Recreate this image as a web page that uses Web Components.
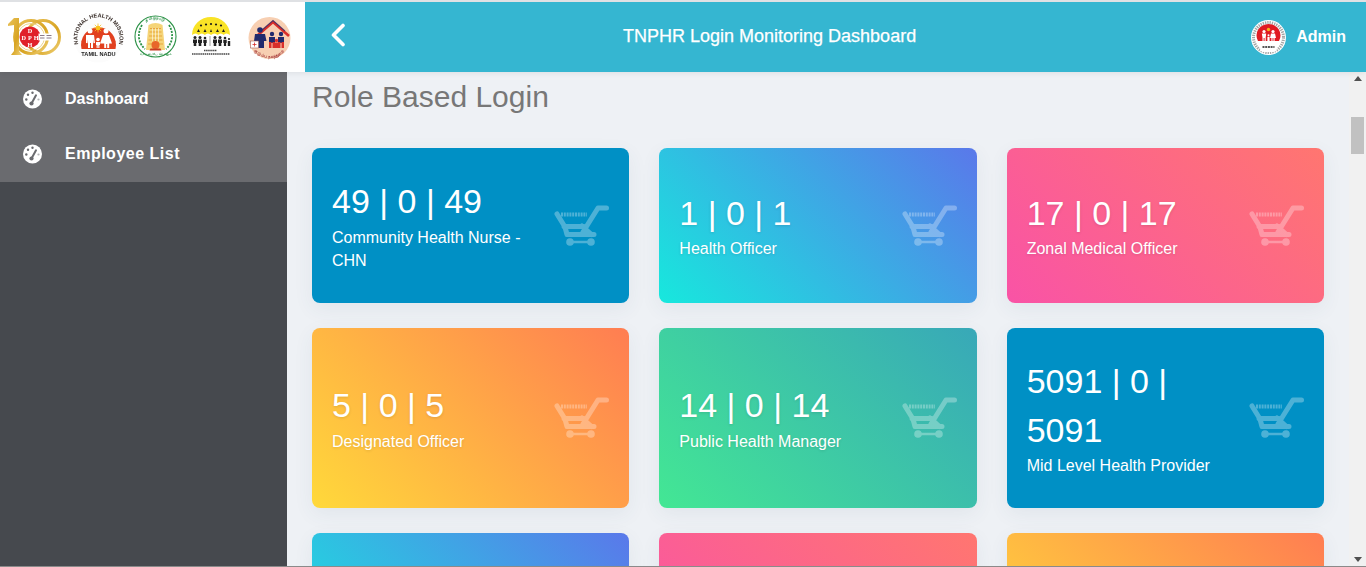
<!DOCTYPE html>
<html lang="en">
<head>
<meta charset="utf-8">
<title>TNPHR Login Monitoring Dashboard</title>
<style>
html,body{margin:0;padding:0;height:100%;overflow:hidden;background:#eef1f5;font-family:"Liberation Sans",Arial,sans-serif}
</style>
</head>
<body>
<app-shell>
  <top-bar slot="top" heading="TNPHR Login Monitoring Dashboard" user="Admin"></top-bar>
  <side-nav slot="side">
    <nav-item>Dashboard</nav-item>
    <nav-item spaced>Employee List</nav-item>
  </side-nav>
  <content-pane slot="main" heading="Role Based Login">
    <stat-card value="49 | 0 | 49" label="Community Health Nurse - CHN" tone="blue"></stat-card>
    <stat-card value="1 | 0 | 1" label="Health Officer" tone="aqua"></stat-card>
    <stat-card value="17 | 0 | 17" label="Zonal Medical Officer" tone="pink"></stat-card>
    <stat-card value="5 | 0 | 5" label="Designated Officer" tone="orange"></stat-card>
    <stat-card value="14 | 0 | 14" label="Public Health Manager" tone="green"></stat-card>
    <stat-card value="5091 | 0 | 5091" label="Mid Level Health Provider" tone="blue"></stat-card>
    <stat-card tone="aqua"></stat-card>
    <stat-card tone="pink"></stat-card>
    <stat-card tone="orange"></stat-card>
  </content-pane>
  <fake-scrollbar slot="scroll"></fake-scrollbar>
</app-shell>

<script>
function def(name, css, html){
  customElements.define(name, class extends HTMLElement{
    connectedCallback(){
      if(this.shadowRoot) return;
      const r=this.attachShadow({mode:'open'});
      r.innerHTML='<style>'+css+'</style>'+(typeof html==='function'?html(this):html);
    }
  });
}
const attr=(el,n)=>{const v=el.getAttribute(n);return v===null?'':v};

def('app-shell',`
  :host{display:flex;flex-direction:column;height:567px;box-sizing:border-box;border-top:2px solid #dfe1e4;border-bottom:1px solid #8a8a8a;overflow:hidden}
  .row{flex:1;min-height:0;display:flex}
`,`<slot name="top"></slot><div class="row"><slot name="side"></slot><slot name="main"></slot><slot name="scroll"></slot></div>`);

def('top-bar',`
  :host{display:flex;height:70px;flex:none;position:relative;z-index:2;box-shadow:0 1px 6px rgba(0,0,0,.08)}
  .blue{flex:1;background:#35b6d1;display:flex;align-items:center;color:#fff}
  .back{margin:0 0 4px 25px;display:block}
  h1{margin:0 0 1px 277px;font:400 18px/1.43 "Liberation Sans",Arial,sans-serif;-webkit-text-stroke:.25px #fff;white-space:nowrap}
  .user{margin-left:auto;display:flex;align-items:center;gap:10px;padding-right:20px;font-weight:700;font-size:16px}
  .user svg{display:block;margin-top:1px}
  .user span{margin-bottom:1px}
`,el=>`<logo-strip></logo-strip><div class="blue">
  <svg class="back" width="16" height="24" viewBox="0 0 16 24"><path d="M13 2.500 3.500 12 13 21.500" fill="none" stroke="#fff" stroke-width="3.600" stroke-linecap="round" stroke-linejoin="round"/></svg>
  <h1>${attr(el,'heading')}</h1>
  <div class="user">
    <svg width="35" height="35" viewBox="0 0 35 35">
      <circle cx="17.500" cy="17.500" r="17.500" fill="#fff"/>
      <circle cx="17.500" cy="17.500" r="15" fill="none" stroke="#a5a5a5" stroke-width="3" stroke-dasharray="1.300 1"/>
      <path d="M7 21A12 11.500 0 1 1 28 21Z" fill="#e01a22"/>
      <rect x="9" y="22" width="17" height="10" rx="4" fill="#fff"/>
      <path d="M11.500 27h12" stroke="#555" stroke-width="2" stroke-dasharray="2 .7"/>
      <circle cx="17.500" cy="9.500" r="1.700" fill="#f6b21b"/>
      <g fill="#fff"><circle cx="13" cy="11.500" r="1.600"/><path d="M10.800 13.500h4.400l-.5 4v3.500h-1.100v-3h-1v3h-1.100v-3.500z"/><circle cx="22" cy="11.500" r="1.600"/><path d="M20 13.500h4l1 4.500h-1.400v3h-1.100v-3h-1v3h-1.100v-3H19z"/><circle cx="17.500" cy="15.300" r="1"/><path d="M16.400 16.800h2.200v4.200h-2.200z"/></g>
    </svg>
    <span>${attr(el,'user')}</span>
  </div>
</div>`);

def('logo-strip',`
  :host{display:block;width:305px;flex:none;background:#fff}
  svg{display:block;filter:blur(.3px)}
  text{font-family:"Liberation Sans",Arial,sans-serif}
`,`<svg width="305" height="70" viewBox="0 2 305 70">
  <defs>
    <linearGradient id="gold" x1="0" y1="0" x2="1" y2="1"><stop offset="0" stop-color="#e9c25a"/><stop offset=".6" stop-color="#d8a422"/><stop offset="1" stop-color="#f0d27a"/></linearGradient>
    <path id="a2" d="M81.900 51.200A21 21 0 1 1 115.100 51.200"/>
    <path id="a5" d="M252 47A19.500 19.500 0 0 0 287 47"/>
    <path id="a3" d="M139 30A18 18 0 0 1 172 30"/>
  </defs>
  <!-- 100 badge -->
  <g>
    <circle cx="43" cy="37" r="16.500" fill="none" stroke="url(#gold)" stroke-width="3"/>
    <circle cx="31" cy="37" r="16.500" fill="none" stroke="url(#gold)" stroke-width="3"/>
    <circle cx="31" cy="37" r="13.500" fill="none" stroke="#ecd48c" stroke-width="1"/>
    <path d="M8 24l6-6h5v33l3 4H11l3-4V25l-6 1z" fill="url(#gold)"/>
    <circle cx="30" cy="37" r="10.500" fill="#e0202a"/>
    <rect x="38.500" y="33.500" width="14" height="7" fill="#fff"/>
    <path d="M40 35.500h4.500M40 38h4.500M46.500 35.500h5M46.500 38h5" stroke="#8a7a88" stroke-width="1"/>
    <g fill="#fff" font-weight="700" font-size="6.200" text-anchor="middle">
      <text x="30" y="32.500" style="font-family:'Liberation Serif',serif">D</text>
      <text x="23.800" y="39.500" style="font-family:'Liberation Serif',serif">D</text>
      <text x="30" y="39.500" style="font-family:'Liberation Serif',serif">P</text>
      <text x="36.200" y="39.500" style="font-family:'Liberation Serif',serif">H</text>
      <text x="30" y="46.500" style="font-family:'Liberation Serif',serif">H</text>
    </g>
  </g>
  <!-- NHM -->
  <g>
    <circle cx="98.500" cy="38" r="24.500" fill="#fcfcfc"/>
    <text font-size="5.600" font-weight="700" fill="#3a2f2a"><textPath href="#a2" startOffset="50%" text-anchor="middle">NATIONAL HEALTH MISSION</textPath></text>
    <path d="M81.500 49A17.500 17.500 0 1 1 115.500 49Z" fill="#e1401f"/>
    <path d="M98 23.500v9M93.500 28h9M94.800 24.800l6.400 6.400M101.200 24.800l-6.400 6.400" stroke="#f9c21e" stroke-width=".8"/>
    <circle cx="98" cy="28" r="2.300" fill="#f9c21e"/>
    <g fill="#fff">
      <circle cx="90" cy="31" r="2.500"/><path d="M86 35h8l1 8-1.500.3-.5-4V48h-2v-5h-1v5h-2v-8.700l-.5 4-1.500-.3z"/>
      <circle cx="106" cy="31" r="2.500"/><path d="M103 35h6l3 8.500h-2.800V48h-2v-4h-1v4h-2v-4.500H100z"/>
      <circle cx="98" cy="39.500" r="1.800"/><path d="M96 42h4v3h-.6v3h-1.100v-2.500h-.6V48h-1.100v-3H96z"/>
    </g>
    <text x="98.500" y="56" font-size="5.600" font-weight="700" fill="#222" text-anchor="middle">TAMIL NADU</text>
  </g>
  <!-- TN emblem -->
  <g>
    <circle cx="155.500" cy="36.500" r="20.500" fill="#fff" stroke="#2c9247" stroke-width="1.100"/>
    <path d="M142 25c-5 8-4 18 3 24M169 25c5 8 4 18-3 24" fill="none" stroke="#2c9247" stroke-width="1.800" stroke-dasharray="2 1.200"/>
    <text font-size="3.800" font-weight="700" fill="#2c9247"><textPath href="#a3" startOffset="50%" text-anchor="middle">தமிழ்நாடு</textPath></text>
    <path d="M146 50l2.500-25q7-4 14 0l2.500 25z" fill="#f5d478"/>
    <path d="M148 44h15M148.500 40h14M149 36h13M149.500 32h12M150 28.500h11" stroke="#e7a73c" stroke-width="1"/>
    <path d="M152.500 28v13M155.500 28v13M158.500 28v13" stroke="#fff" stroke-width=".8" opacity=".7"/>
    <circle cx="155.500" cy="45" r="4" fill="#e8662a"/>
    <path d="M150.500 48.500h10l1 2h-12z" fill="#c73a22"/>
    <text x="155.500" y="54.800" font-size="3" font-weight="700" fill="#2c9247" text-anchor="middle">வாய்மையே வெல்லும்</text>
  </g>
  <!-- umbrella -->
  <g>
    <path d="M192 35A19 18 0 0 1 230 35q-4-3-6.300 0-3-3-6.200 0-3-3-6.500 0-3-3-6.200 0-3-3-6.200 0-3-3-6.600 0z" fill="#f9e326"/>
    <g fill="#1c1c1c"><circle cx="201" cy="25.500" r="1.100"/><circle cx="206" cy="24.500" r="1.100"/><circle cx="211" cy="24" r="1.100"/><circle cx="216" cy="24.500" r="1.100"/><circle cx="221" cy="25.500" r="1.100"/><path d="M197 32l1.500-3 1.500 3zM203.500 32l1.500-3 1.500 3zM210 32l1-3 1 3zM216 32l1.500-3 1.500 3zM222 32l1.500-3 1.500 3z"/></g>
    <g fill="#222">
      <circle cx="195" cy="37.500" r="1.500"/><path d="M193 39.500h4v3.500h-.7v3h-2.600v-3H193z"/>
      <circle cx="200" cy="37.500" r="1.500"/><path d="M198 39.500h4v3.500h-.7v3h-2.600v-3H198z"/>
      <circle cx="205" cy="38" r="1.300"/><path d="M203.300 39.800h3.400v3.200h-.6v3h-2.200v-3h-.6z"/>
      <circle cx="215" cy="37.500" r="1.500"/><path d="M213 39.500h4v3.500h-.7v3h-2.600v-3H213z"/>
      <circle cx="220" cy="37.500" r="1.500"/><path d="M218 39.500h4v3.500h-.7v3h-2.600v-3H218z"/>
      <circle cx="225" cy="38" r="1.300"/><path d="M223.300 39.800h3.400v3.200h-.6v3h-2.200v-3h-.6z"/>
      <circle cx="229" cy="39" r="1.100"/><path d="M227.800 41h2.400v5h-2.400z"/>
    </g>
    <path d="M210 36v10" stroke="#888" stroke-width=".8"/>
    <path d="M204 50.500h13M192 54h38" stroke="#444" stroke-width="1.400" stroke-dasharray="1.500 .6"/>
  </g>
  <!-- family welfare -->
  <g>
    <circle cx="269.500" cy="38" r="21" fill="#f7cfb2"/>
    <path d="M258 35l15-13 16 14" fill="none" stroke="#d92f2a" stroke-width="2.600" stroke-linejoin="miter"/>
    <path d="M262 30l11-9.500 12 10.500" fill="none" stroke="#1e2a6e" stroke-width="1.100" opacity=".7"/>
    <g fill="#1f2a6d">
      <circle cx="260" cy="30" r="2.800"/><path d="M255 34h10l1.500 7h-2.500v7h-7v-7h-3z"/>
      <circle cx="272" cy="34" r="2.200"/><circle cx="281" cy="34" r="2.200"/>
      <path d="M269 37h6v6h-6zM278 37h6v6h-6z"/>
    </g>
    <g fill="#d92f2a"><path d="M269 42h2.500v6H269zM272.500 42H275v6h-2.500zM278 42h2.500v6H278zM281.500 42h2.500v6h-2.500z"/><circle cx="276.500" cy="40.500" r="1.700"/><path d="M274.500 42.500h4v5.500h-4z"/></g>
    <rect x="250.500" y="41" width="8" height="7" fill="#fff" stroke="#a85f55" stroke-width=".6"/><path d="M254.500 42.500v4M252.500 44.500h4" stroke="#d92f2a" stroke-width=".8"/>
    <text font-size="4" font-weight="700" fill="#a53a3c"><textPath href="#a5" startOffset="50%" text-anchor="middle">குடும்ப நலத்துறை</textPath></text>
  </g>
</svg>`);

def('side-nav',`
  :host{display:block;width:287px;flex:none;background:#46494e;box-sizing:border-box}
  .menu{background:#6a6b6f}
`,`<div class="menu"><slot></slot></div>`);

def('nav-item',`
  :host{display:flex;align-items:center;height:55px;padding-left:22px;color:#fff;font:700 16px/1.43 "Liberation Sans",Arial,sans-serif}
  :host([spaced]){letter-spacing:.5px}
  svg{display:block;flex:none;margin:0 22px 1px 0}
  span{margin-bottom:1px}
`,`<svg width="21" height="20" viewBox="0 0 21 20"><circle cx="10.500" cy="10" r="9.500" fill="#fff"/><g fill="#6a6b6f"><circle cx="4.300" cy="10.500" r="1.200"/><circle cx="6" cy="5.800" r="1.200"/><circle cx="10.500" cy="3.800" r="1.200"/><circle cx="16.500" cy="10.500" r="1.100" opacity=".5"/><circle cx="9.500" cy="14.500" r="2.100"/></g><path d="M9.500 14.500 14 6.300" stroke="#6a6b6f" stroke-width="2" stroke-linecap="round"/></svg><span><slot></slot></span>`);

def('content-pane',`
  :host{display:block;flex:1;min-width:0;overflow:hidden;padding:0 25px;background:#eef1f5}
  h2{margin:0 0 26px;font:400 30px/50px "Liberation Sans",Arial,sans-serif;color:#777}
  .grid{display:grid;grid-template-columns:repeat(3,1fr);grid-template-rows:155px 180px 155px;gap:25px 30px}
`,el=>`<h2>${attr(el,'heading')}</h2><div class="grid"><slot></slot></div>`);

const tones={
  blue:'#0090c5',
  aqua:'linear-gradient(45deg,#17e8dd,#5a78ea)',
  pink:'linear-gradient(45deg,#f953a6,#ff7670)',
  orange:'linear-gradient(45deg,#ffd93a,#ff7d52)',
  green:'linear-gradient(45deg,#43e794,#38a8b8)'
};
def('stat-card',`
  :host{display:flex;align-items:center;box-sizing:border-box;padding:30px 20px;border-radius:8px;color:#fff;box-shadow:0 6px 20px rgba(60,80,110,.07);font-family:"Liberation Sans",Arial,sans-serif;line-height:1.42857}
  .text{flex:1;min-width:0;padding-right:30px}
  :host(:not([tone="blue"])) .text{text-shadow:0 1px 3px rgba(0,0,0,.12)}
  .v{font-size:34px;margin:-1px 0 1px}
  .l{font-size:16px}
  svg{display:block;flex:none;margin-left:auto}
`,el=>{
  el.style.background=tones[attr(el,'tone')];
  const v=attr(el,'value'),l=attr(el,'label');
  return (v?`<div class="text"><div class="v">${v}</div><div class="l">${l}</div></div>`:'')+
  `<svg width="55" height="42" viewBox="0 0 55 42"><g opacity=".3" fill="none" stroke="#fff" stroke-linecap="round" stroke-linejoin="round">
    <path stroke-width="5" d="M52.500 3H44L29 27M10 21.500H30M3 9l8 13 2 7.500H40M28 21l9.500 8.500"/>
    <path stroke-width="4" stroke-linecap="butt" stroke-dasharray="2 .8" d="M7 9.500H33"/>
    <path stroke-width="2.400" d="M16 37H37"/>
    <circle cx="16" cy="37" r="3.800" fill="#fff" stroke="none"/><circle cx="37" cy="37" r="3.800" fill="#fff" stroke="none"/>
  </g></svg>`;
});

def('fake-scrollbar',`
  :host{display:flex;flex-direction:column;align-items:center;width:17px;flex:none;background:#f1f1f1;box-sizing:border-box;padding:4px 0}
  .thumb{width:13px;height:37px;margin-top:36px;background:#c1c1c1}
  .up,.down{width:0;height:0;border-left:4px solid transparent;border-right:4px solid transparent}
  .up{border-bottom:5px solid #505050}
  .down{border-top:5px solid #505050;margin-top:auto}
`,`<div class="up"></div><div class="thumb"></div><div class="down"></div>`);
</script>
</body>
</html>
